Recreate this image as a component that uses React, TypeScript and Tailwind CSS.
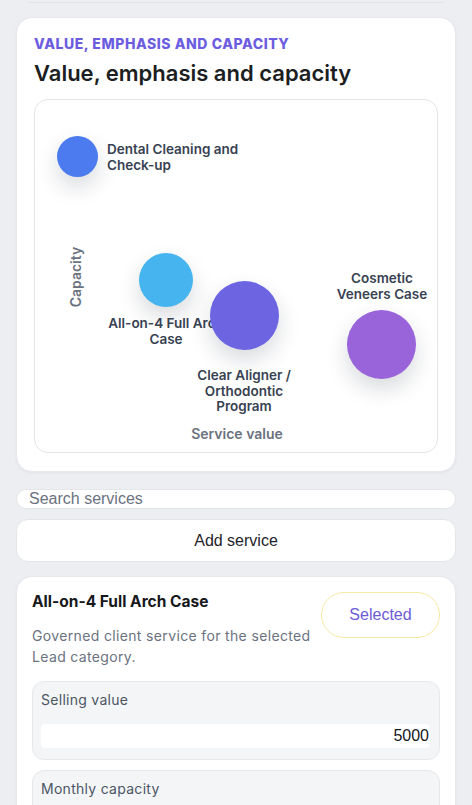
import React from "react";

const inter = { fontFamily: "Inter, 'Noto Sans', sans-serif" };
const arial = { fontFamily: "'Liberation Sans', Arial, sans-serif" };

function Bubble({
  left,
  top,
  size,
  color,
}: {
  left: number;
  top: number;
  size: number;
  color: string;
}) {
  return (
    <div
      className="absolute rounded-full shadow-[0_10px_22px_rgba(15,23,42,0.16)]"
      style={{ left, top, width: size, height: size, background: color }}
    />
  );
}

function Label({
  left,
  top,
  width,
  center,
  children,
}: {
  left: number;
  top: number;
  width: number;
  center?: boolean;
  children: React.ReactNode;
}) {
  return (
    <div
      className={`absolute text-[13.5px] leading-[15.5px] font-semibold text-[#374151] ${center ? "text-center" : "text-left"}`}
      style={{ left, top, width }}
    >
      {children}
    </div>
  );
}

export default function App() {
  return (
    <div className="min-h-[805px] bg-[#eceef1] pb-6" style={inter}>
      <div className="mx-[27px] h-[3px] rounded-b-lg border-b border-[#dfe2e6] bg-[#eceef1]" />

      {/* Chart card */}
      <div className="mx-4 mt-[14px] rounded-[16px] border border-[#e6e8eb] bg-white px-[17px] pt-[16px] pb-[18px] shadow-[0_1px_3px_rgba(15,23,42,0.05)]">
        <div className="text-[14px] leading-[20px] font-extrabold uppercase tracking-[0.04em] text-[#6c5de0]">
          Value, emphasis and capacity
        </div>
        <h2 className="mt-[5px] text-[22px] leading-[28px] font-semibold text-[#1c1e22]">
          Value, emphasis and capacity
        </h2>
        <div className="relative mt-[12px] h-[354px] rounded-[14px] border border-[#e3e5e8] bg-white">
          {/* axis labels */}
          <div
            className="absolute text-[14px] font-semibold leading-[18px] text-[#6b7280] -rotate-90 whitespace-nowrap"
            style={{ left: 41 - 31, top: 177 - 9, width: 62, textAlign: "center" }}
          >
            Capacity
          </div>
          <div
            className="absolute text-[14px] font-semibold leading-[18px] text-[#6b7280] text-center"
            style={{ left: 202 - 60, top: 334 - 9, width: 120 }}
          >
            Service value
          </div>

          {/* Dental */}
          <Bubble left={22} top={36} size={41} color="#4b7bef" />
          <Label left={72} top={42} width={145}>
            Dental Cleaning and Check-up
          </Label>

          {/* All-on-4 */}
          <Bubble left={104} top={153} size={54} color="#46b4ee" />
          <Label left={67} top={216} width={128} center>
            All-on-4 Full Arch Case
          </Label>

          {/* Clear aligner */}
          <Bubble left={175} top={181} size={69} color="#6c64e1" />
          <Label left={157} top={268} width={104} center>
            Clear Aligner / Orthodontic Program
          </Label>

          {/* Cosmetic */}
          <Label left={295} top={171} width={104} center>
            Cosmetic Veneers Case
          </Label>
          <Bubble left={312} top={210} size={69} color="#9963da" />
        </div>
      </div>

      {/* Search */}
      <input
        type="text"
        placeholder="Search services"
        className="mx-4 mt-[17px] block h-[20px] w-[440px] rounded-full border border-[#e3e5e8] bg-white px-[12px] text-[16px] leading-[20px] text-[#374151] placeholder:text-[#6b7280] outline-none"
        style={arial}
      />

      {/* Add service */}
      <button
        type="button"
        className="mx-4 mt-[10px] flex h-[43px] w-[440px] items-center justify-center rounded-[12px] border border-[#e3e5e8] bg-white text-[16px] text-[#1f2329]"
        style={arial}
      >
        Add service
      </button>

      {/* Service card */}
      <div className="mx-4 mt-[14px] rounded-[16px] border border-[#e6e8eb] bg-white px-[15px] pt-[15px] pb-4 shadow-[0_1px_3px_rgba(15,23,42,0.05)]">
        <div className="flex items-start gap-[8px]">
          <div className="min-w-0 flex-1">
            <div className="text-[15.5px] leading-[20px] font-bold text-[#16181c]">
              All-on-4 Full Arch Case
            </div>
            <p className="mt-[13px] text-[14px] leading-[21px] tracking-[0.025em] text-[#6b7280]">
              Governed client service for the selected Lead category.
            </p>
          </div>
          <div
            className="flex h-[46px] w-[119px] shrink-0 items-center justify-center rounded-full border border-[#f7e9a6] bg-white text-[16px] text-[#6d5bd6]"
            style={arial}
          >
            Selected
          </div>
        </div>

        <div className="mt-[14px] rounded-[12px] border border-[#e6e8eb] bg-[#f4f5f7] pl-[8px] pr-[9px] pt-[8px] pb-[11px]">
          <div className="text-[14px] leading-[20px] tracking-[0.02em] text-[#4b5563]">
            Selling value
          </div>
          <div
            className="mt-[14px] flex h-[24px] items-center justify-end rounded-[4px] bg-white pr-[1px] text-[16px] text-[#16181c]"
            style={arial}
          >
            5000
          </div>
        </div>

        <div className="mt-[10px] rounded-[12px] border border-[#e6e8eb] bg-[#f4f5f7] pl-[8px] pr-[9px] pt-[8px] pb-[11px]">
          <div className="text-[14px] leading-[20px] tracking-[0.02em] text-[#4b5563]">
            Monthly capacity
          </div>
          <div
            className="mt-[14px] flex h-[24px] items-center justify-end rounded-[4px] bg-white pr-[1px] text-[16px] text-[#16181c]"
            style={arial}
          >
            40
          </div>
        </div>
      </div>
    </div>
  );
}
